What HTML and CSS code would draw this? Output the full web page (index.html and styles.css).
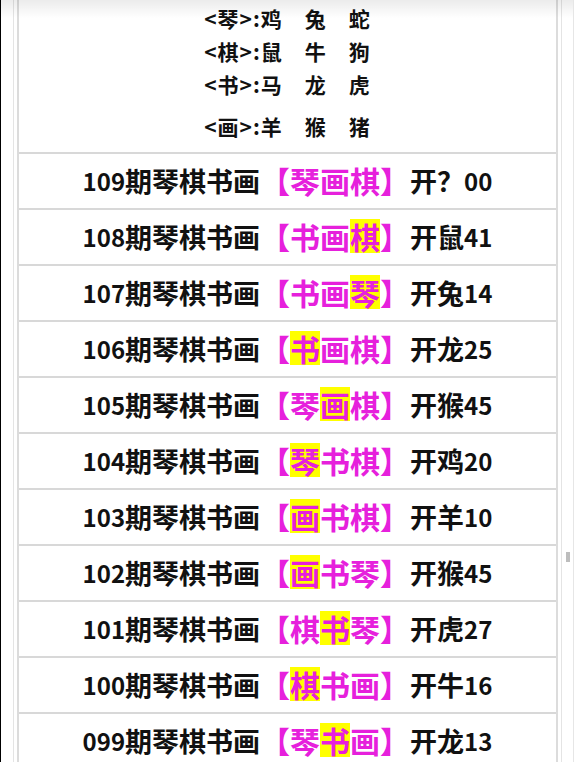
FILE: index.html
```html
<!DOCTYPE html>
<html lang="zh-CN">
<head>
<meta charset="utf-8">
<title>琴棋书画</title>
<meta name="viewport" content="width=device-width, initial-scale=1">
    <link rel="stylesheet" href="styles.css">
</head>
<body>
    <div class="page">
        <div class="frame">
            <div class="board">
                <div class="legend">
                    <p>&lt;琴&gt;:鸡&emsp;兔&emsp;蛇</p>
                    <p>&lt;棋&gt;:鼠&emsp;牛&emsp;狗</p>
                    <p>&lt;书&gt;:马&emsp;龙&emsp;虎</p>
                    <p class="last">&lt;画&gt;:羊&emsp;猴&emsp;猪</p>
                </div>
                <div class="row"><span class="no">109</span>期琴棋书画<span class="pick">【琴画棋】</span>开？<span class="no">00</span></div>
                <div class="row"><span class="no">108</span>期琴棋书画<span class="pick">【书画<span class="hit">棋</span>】</span>开鼠<span class="no">41</span></div>
                <div class="row"><span class="no">107</span>期琴棋书画<span class="pick">【书画<span class="hit">琴</span>】</span>开兔<span class="no">14</span></div>
                <div class="row"><span class="no">106</span>期琴棋书画<span class="pick">【<span class="hit">书</span>画棋】</span>开龙<span class="no">25</span></div>
                <div class="row"><span class="no">105</span>期琴棋书画<span class="pick">【琴<span class="hit">画</span>棋】</span>开猴<span class="no">45</span></div>
                <div class="row"><span class="no">104</span>期琴棋书画<span class="pick">【<span class="hit">琴</span>书棋】</span>开鸡<span class="no">20</span></div>
                <div class="row"><span class="no">103</span>期琴棋书画<span class="pick">【<span class="hit">画</span>书棋】</span>开羊<span class="no">10</span></div>
                <div class="row"><span class="no">102</span>期琴棋书画<span class="pick">【<span class="hit">画</span>书琴】</span>开猴<span class="no">45</span></div>
                <div class="row"><span class="no">101</span>期琴棋书画<span class="pick">【棋<span class="hit">书</span>琴】</span>开虎<span class="no">27</span></div>
                <div class="row"><span class="no">100</span>期琴棋书画<span class="pick">【<span class="hit">棋</span>书画】</span>开牛<span class="no">16</span></div>
                <div class="row"><span class="no">099</span>期琴棋书画<span class="pick">【琴<span class="hit">书</span>画】</span>开龙<span class="no">13</span></div>
            </div>
        </div>
        <div class="thumb"></div>
    </div>
</body>
</html>
```

FILE: styles.css
```css
body {
    margin: 0;
    padding: 0;
    background-color: #fff;
    font-family: "Noto Sans CJK SC", "Noto Sans", sans-serif;
    color: #111;
    overflow: hidden;
}
.page {
    position: relative;
    width: 572px;
    height: 762px;
    border-left: 1px solid #000;
    border-right: 1px solid #e6e6e6;
    overflow: hidden;
}
/* soft shadow under the browser bar */
.page::before {
    content: "";
    position: absolute;
    left: 0;
    right: 0;
    top: 0;
    height: 18px;
    background: linear-gradient(rgba(0, 0, 0, 0.08), rgba(0, 0, 0, 0));
    z-index: 2;
}
.frame {
    margin-left: 12px;
    width: 541px;
    border-left: 1px solid #e4e4e4;
    border-right: 1px solid #e4e4e4;
    padding: 0 3px;
}
.board {
    border-left: 2px solid #dcdcdc;
    border-right: 2px solid #dcdcdc;
}
.legend {
    height: 152px;
    box-sizing: border-box;
    padding-top: 2px;
    text-align: center;
    font-size: 21px;
    font-weight: bold;
    letter-spacing: 1px;
}
.legend p {
    margin: 0;
    line-height: 33px;
}
.legend p.last {
    margin-top: 9px;
}
.row {
    height: 52px;
    padding-bottom: 2px;
    border-top: 2px solid #d8d8d8;
    display: flex;
    align-items: center;
    justify-content: center;
    font-size: 27px;
    font-weight: bold;
    white-space: nowrap;
}
.no {
    font-size: 24px;
}
.pick {
    color: #e620dc;
    font-size: 30px;
}
.hit {
    display: inline-block;
    background-color: #ffff00;
    line-height: 34px;
}
.thumb {
    position: absolute;
    right: 3px;
    top: 552px;
    width: 4px;
    height: 10px;
    background-color: #bdbdbd;
}
```
